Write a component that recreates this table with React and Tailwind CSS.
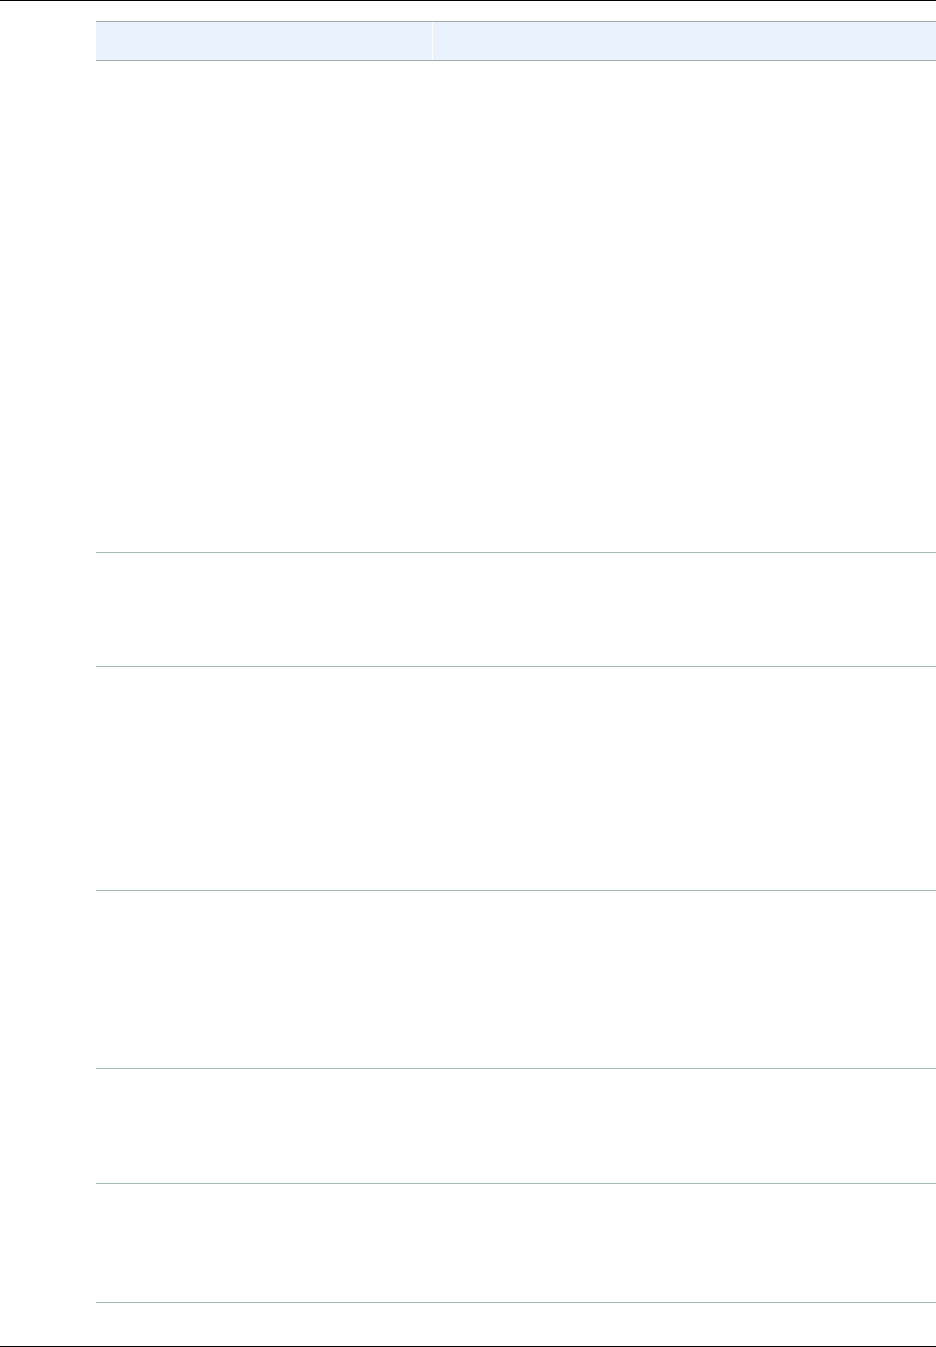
import React from 'react';

const rows = ['h-[492px]', 'h-[114px]', 'h-[224px]', 'h-[178px]', 'h-[115px]', 'h-[119px]'];

const App = () => {
    return (
        <div className="w-[936px] h-[1347px] bg-white flex flex-col font-['Liberation_Sans',sans-serif]">
            <div className="h-px bg-black shrink-0" />
            <div className="flex-1 pt-5 pl-24">
                <div className="flex flex-col">
                    <div className="flex h-10 bg-[#eaf2fd] border-y border-[#a2abab]">
                        <div className="w-[337px] border-r border-white" />
                        <div className="flex-1" />
                    </div>
                    {rows.map((h, i) => (
                        <div key={i} className={`${h} border-b border-[#a8bab6]`} />
                    ))}
                </div>
            </div>
            <div className="h-px bg-black shrink-0" />
        </div>
    );
};

export default App;
